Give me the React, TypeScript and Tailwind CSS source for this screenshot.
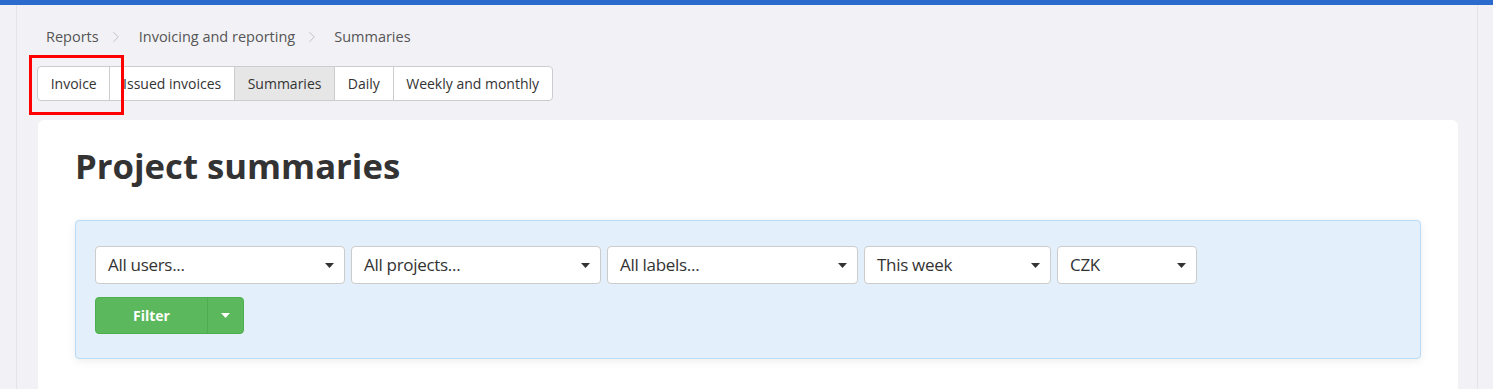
import { ChevronRight } from 'lucide-react'

const font = { fontFamily: '"Open Sans", "Noto Sans", sans-serif' }

function Caret({ color = '#333' }: { color?: string }) {
    return (
        <svg width="9" height="5" viewBox="0 0 9 5" className="shrink-0">
            <path d="M0 0 L9 0 L4.5 5 Z" fill={color} />
        </svg>
    )
}

function Select({ label, width }: { label: string; width: string }) {
    return (
        <div className={`${width} h-[38px] bg-white border border-[#ccc] rounded-[4px] flex items-center justify-between pl-3 pr-[10px]`}>
            <span className="text-[17px] text-[#333] tracking-[-0.3px]">{label}</span>
            <Caret />
        </div>
    )
}

const tabs = ['Invoice', 'Issued invoices', 'Summaries', 'Daily', 'Weekly and monthly']

export default function App() {
    return (
        <div className="min-h-screen bg-[#f2f2f6] flex flex-col" style={font}>
            <div className="h-[5px] bg-[#2a6bcd]" />
            <div className="flex flex-grow">
                <div className="w-[17px] border-r border-[#e3e3ea]" />
                <main className="w-[1461px] border-r border-[#e3e3ea] px-5 pt-[21px]">
                    <nav className="flex items-center text-[14.5px] text-[#555] pl-[9px] h-[22px]">
                        <span>Reports</span>
                        <ChevronRight size={18} strokeWidth={1.2} className="ml-[8px] mr-[14px] text-[#bbb]" />
                        <span>Invoicing and reporting</span>
                        <ChevronRight size={18} strokeWidth={1.2} className="ml-[8px] mr-[13px] text-[#bbb]" />
                        <span>Summaries</span>
                    </nav>
                    <div className="relative mt-[18px] inline-flex h-[35px] bg-white border border-[#ccc] rounded-[4px] text-[14px] text-[#333]">
                        {tabs.map((t, i) => (
                            <div
                                key={t}
                                className={`flex items-center px-[12.7px] ${i > 0 ? 'border-l border-[#ccc]' : ''} ${t === 'Summaries' ? 'bg-[#e6e6e6] border-[#adadad]' : ''}`}
                            >
                                {t}
                            </div>
                        ))}
                        <div className="absolute left-[-9px] top-[-12px] w-[95px] h-[60px] border-[3px] border-[#ff0000]" />
                    </div>
                    <div className="mt-[19px] ml-px mr-[-1px] bg-white rounded-t-[6px] px-[37px] pt-[22px] pb-6 h-[280px]">
                        <h1 className="text-[34.7px] font-bold text-[#333] leading-[48px]">Project summaries</h1>
                        <div className="mt-[30px] bg-[#e3effb] border border-[#b9dbf5] rounded-[4px] shadow-[0_2px_8px_rgba(0,0,0,0.08)] px-[19px] pt-[25px] pb-[24px]">
                            <div className="flex gap-[6px]">
                                <Select label="All users..." width="w-[250px]" />
                                <Select label="All projects..." width="w-[250px]" />
                                <Select label="All labels..." width="w-[251px]" />
                                <Select label="This week" width="w-[187px]" />
                                <Select label="CZK" width="w-[140px]" />
                            </div>
                            <div className="mt-[13px] inline-flex h-[37px] rounded-[4px] border border-[#4cae4c] bg-[#5cb85c] text-white">
                                <div className="w-[111px] flex items-center justify-center text-[14px] font-bold">Filter</div>
                                <div className="w-[36px] border-l border-[#4cae4c] flex items-center justify-center">
                                    <Caret color="#fff" />
                                </div>
                            </div>
                        </div>
                    </div>
                </main>
            </div>
        </div>
    )
}
